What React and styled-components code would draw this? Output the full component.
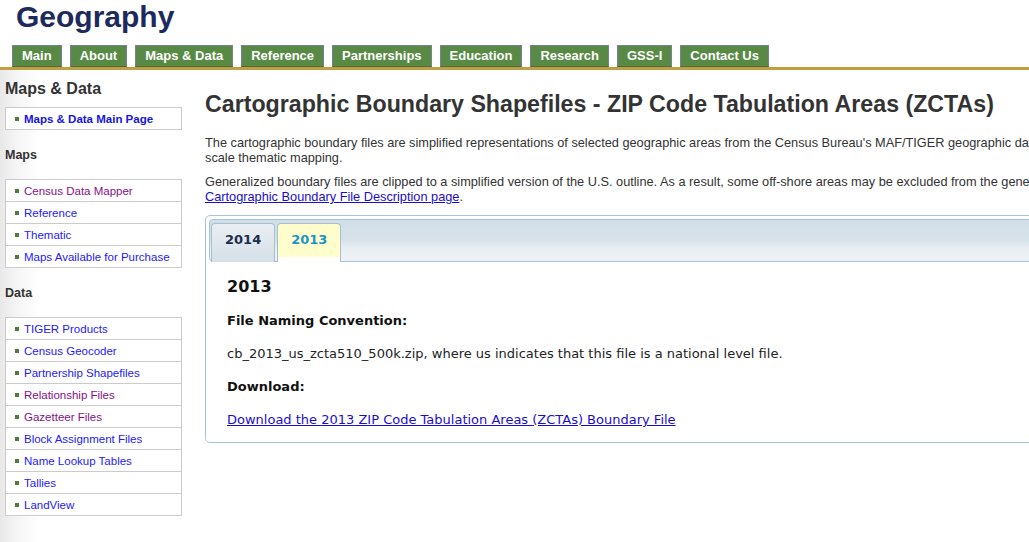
import React, { useState } from "react";
import styled, { createGlobalStyle } from "styled-components";

const mapsLinks = [
  { label: "Census Data Mapper", visited: true },
  { label: "Reference" },
  { label: "Thematic" },
  { label: "Maps Available for Purchase" },
];

const dataLinks = [
  { label: "TIGER Products" },
  { label: "Census Geocoder" },
  { label: "Partnership Shapefiles" },
  { label: "Relationship Files", visited: true },
  { label: "Gazetteer Files", visited: true },
  { label: "Block Assignment Files" },
  { label: "Name Lookup Tables" },
  { label: "Tallies" },
  { label: "LandView" },
];

const navItems = [
  "Main",
  "About",
  "Maps & Data",
  "Reference",
  "Partnerships",
  "Education",
  "Research",
  "GSS-I",
  "Contact Us",
];

const SideList = ({ items }) => (
  <LinkBox>
    {items.map((item) => (
      <LinkItem key={item.label}>
        <SideLink href="#" $visited={item.visited}>
          {item.label}
        </SideLink>
      </LinkItem>
    ))}
  </LinkBox>
);

const App = () => {
  const [year, setYear] = useState("2013");

  return (
    <>
      <GlobalStyle />
      <Header>
        <SiteTitle>Geography</SiteTitle>
        <Nav>
          {navItems.map((item) => (
            <NavTab key={item} href="#">
              {item}
            </NavTab>
          ))}
        </Nav>
      </Header>
      <Body>
        <Sidebar>
          <SideTitle>Maps &amp; Data</SideTitle>
          <LinkBox>
            <LinkItem>
              <SideLink href="#" $bold>
                Maps &amp; Data Main Page
              </SideLink>
            </LinkItem>
          </LinkBox>
          <SideHeading>Maps</SideHeading>
          <SideList items={mapsLinks} />
          <SideHeading>Data</SideHeading>
          <SideList items={dataLinks} />
        </Sidebar>
        <Main>
          <PageTitle>
            Cartographic Boundary Shapefiles - ZIP Code Tabulation Areas (ZCTAs)
          </PageTitle>
          <Para>
            The cartographic boundary files are simplified representations of
            selected geographic areas from the Census Bureau's MAF/TIGER
            geographic database. These boundary files are specifically designed
            for small
            <br />
            scale thematic mapping.
          </Para>
          <Para>
            Generalized boundary files are clipped to a simplified version of
            the U.S. outline. As a result, some off-shore areas may be excluded
            from the generalized files. For more details about these files,
            please view the
            <br />
            <TextLink href="#">Cartographic Boundary File Description page</TextLink>.
          </Para>
          <Panel>
            <TabBar>
              {["2014", "2013"].map((y) => (
                <YearTab
                  key={y}
                  $active={year === y}
                  onClick={() => setYear(y)}
                >
                  {y}
                </YearTab>
              ))}
            </TabBar>
            <PanelBody>
              <YearHeading>{year}</YearHeading>
              <Label $gap={17}>File Naming Convention:</Label>
              <PanelText>
                cb_{year}_us_zcta510_500k.zip, where us indicates that this file
                is a national level file.
              </PanelText>
              <Label $gap={14}>Download:</Label>
              <PanelLink href="#">
                Download the {year} ZIP Code Tabulation Areas (ZCTAs) Boundary
                File
              </PanelLink>
            </PanelBody>
          </Panel>
        </Main>
      </Body>
    </>
  );
};

export default App;

const GlobalStyle = createGlobalStyle`
  html, body {
    margin: 0;
    background: #fff;
    overflow: hidden;
  }
  body {
    font-family: "Liberation Sans", Arial, sans-serif;
    color: #333;
  }
`;

const Header = styled.header`
  width: 1460px;
`;

const SiteTitle = styled.h1`
  margin: 0;
  padding-left: 16px;
  height: 35px;
  font-size: 30px;
  line-height: 34px;
  font-weight: bold;
  color: #1d2a5d;
`;

const Nav = styled.nav`
  display: flex;
  gap: 8px;
  padding: 10px 0 0 12px;
  border-bottom: 3px solid #bf9f42;
`;

const NavTab = styled.a`
  box-sizing: border-box;
  height: 22px;
  padding: 0 9px;
  background: #588a45;
  border: 1px solid #76838f;
  border-bottom-color: #4c6a3c;
  color: #fff;
  font-size: 13px;
  font-weight: bold;
  line-height: 20px;
  text-decoration: none;
  white-space: nowrap;
`;

const Body = styled.div`
  display: flex;
  width: 1460px;
  min-height: 480px;
`;

const Sidebar = styled.aside`
  width: 183px;
  flex: none;
  box-sizing: border-box;
  padding: 10px 0 20px 5px;
  background: linear-gradient(to right, #e8e8e8 0, #f6f6f6 18px, #fff 40px);
`;

const SideTitle = styled.h2`
  margin: 0 0 9px;
  font-size: 16px;
  line-height: 18px;
  font-weight: bold;
  color: #333;
`;

const SideHeading = styled.h3`
  margin: 18px 0 16px;
  font-size: 12.5px;
  line-height: 15px;
  font-weight: bold;
  color: #333;
`;

const LinkBox = styled.ul`
  list-style: none;
  margin: 0;
  padding: 0;
  width: 177px;
  box-sizing: border-box;
  border: 1px solid #cbcbcb;
  background: #fff;
`;

const LinkItem = styled.li`
  display: flex;
  align-items: center;
  height: 21px;
  padding-left: 9px;
  border-bottom: 1px solid #cbcbcb;

  &:last-child {
    border-bottom: none;
  }

  &::before {
    content: "";
    width: 4px;
    height: 4px;
    margin-right: 5px;
    background: #4e7a3e;
  }
`;

const SideLink = styled.a`
  font-size: 11.5px;
  font-weight: ${(p) => (p.$bold ? "bold" : "normal")};
  color: ${(p) => (p.$visited ? "#86108a" : p.$bold ? "#1515e6" : "#2419ff")};
  text-decoration: none;
  white-space: nowrap;
`;

const Main = styled.main`
  width: 1240px;
  flex: none;
  margin-left: 22px;
  padding-top: 21px;
`;

const PageTitle = styled.h1`
  margin: 0 0 17px;
  font-size: 23.2px;
  line-height: 27px;
  font-weight: bold;
  color: #333;
  white-space: nowrap;
`;

const Para = styled.p`
  margin: 0 0 9px;
  font-size: 12.75px;
  line-height: 15px;
  color: #333;
  white-space: nowrap;
`;

const TextLink = styled.a`
  color: #1a0dcc;
  text-decoration: underline;
`;

const Panel = styled.section`
  margin-top: 11px;
  padding: 3px;
  border: 1px solid #a8c3d8;
  border-radius: 5px;
  font-family: "DejaVu Sans", Verdana, sans-serif;
`;

const TabBar = styled.div`
  display: flex;
  align-items: flex-end;
  gap: 2px;
  box-sizing: border-box;
  height: 43px;
  padding-left: 1px;
  border: 1px solid #a8c3d8;
  border-radius: 4px;
  background: linear-gradient(
    #d3dfe8 0%,
    #d6e1ea 48%,
    #e9eef3 70%,
    #eef2f6 100%
  );
`;

const YearTab = styled.div`
  box-sizing: border-box;
  height: 39px;
  margin-bottom: -1px;
  padding: 8px 13px 0;
  border: 1px solid #a8bfd2;
  border-bottom: none;
  border-radius: 4px 4px 0 0;
  background: ${(p) =>
    p.$active ? "#fffdcc" : "linear-gradient(#e9eef3, #d5e0e8)"};
  box-shadow: ${(p) => (p.$active ? "inset 0 -5px 0 #fff" : "none")};
  color: ${(p) => (p.$active ? "#1c95c8" : "#1b2d4d")};
  font-size: 13px;
  font-weight: bold;
  line-height: 16px;
  cursor: pointer;
`;

const PanelBody = styled.div`
  padding: 15px 18px 11px;
  color: #222;
`;

const YearHeading = styled.h2`
  margin: 0 0 17px;
  font-size: 16px;
  line-height: 19px;
  font-weight: bold;
  color: #111;
`;

const Label = styled.h4`
  margin: 0 0 ${(p) => p.$gap}px;
  font-size: 13px;
  line-height: 16px;
  font-weight: bold;
  color: #111;
`;

const PanelText = styled.p`
  margin: 0 0 17px;
  font-size: 13px;
  line-height: 16px;
`;

const PanelLink = styled.a`
  display: inline-block;
  font-size: 13px;
  line-height: 16px;
  color: #1a0dcc;
  text-decoration: underline;
`;
